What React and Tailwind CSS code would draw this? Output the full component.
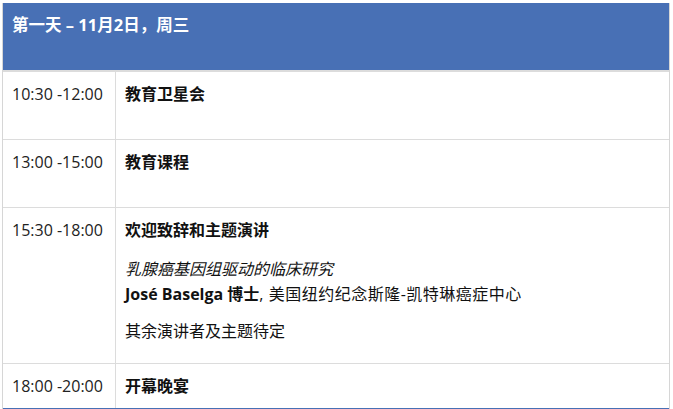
export default function App() {
  const font = { fontFamily: '"Open Sans", "Noto Sans CJK SC", sans-serif' };
  const rows = [
    { time: "10:30 -12:00", h: "h-[68px]", content: <p className="font-bold">教育卫星会</p> },
    { time: "13:00 -15:00", h: "h-[68px]", content: <p className="font-bold">教育课程</p> },
    {
      time: "15:30 -18:00",
      h: "h-[156px]",
      content: (
        <div>
          <p className="font-bold">欢迎致辞和主题演讲</p>
          <p className="italic mt-[17px]">乳腺癌基因组驱动的临床研究</p>
          <p className="mt-[3px]">
            <span className="font-bold">José Baselga 博士</span>
            <span className="tracking-[0.5px]">, 美国纽约纪念斯隆-凯特琳癌症中心</span>
          </p>
          <p className="mt-[15px]">其余演讲者及主题待定</p>
        </div>
      ),
    },
    { time: "18:00 -20:00", h: "h-[44px]", content: <p className="font-bold">开幕晚宴</p> },
  ];
  return (
    <div className="w-[673px] h-[409px] bg-white overflow-hidden" style={font}>
      <div className="ml-[2px] mt-[3px] w-[668px] border-x border-[#d6d6d6]">
        <div className="h-[67px] bg-[#4870b5] px-[9px] pt-[10px] text-white font-bold text-[16.5px] leading-[24px]">
          第一天 – 11月2日，周三
        </div>
        <div className="h-[2px] bg-[#dcdcdc]" />
        {rows.map((r, i) => (
          <div
            key={i}
            className={`grid grid-cols-[113px_1fr] ${r.h} ${i < rows.length - 1 ? "border-b border-[#dcdcdc]" : ""} text-[16px] leading-[22px] text-[#111]`}
          >
            <div className="border-r border-[#dcdcdc] pl-[9px] pt-[11px] text-[#222]">{r.time}</div>
            <div className="pl-[9px] pt-[11px]">{r.content}</div>
          </div>
        ))}
        <div className="h-[2px] bg-[#4870b5]" />
      </div>
    </div>
  );
}
